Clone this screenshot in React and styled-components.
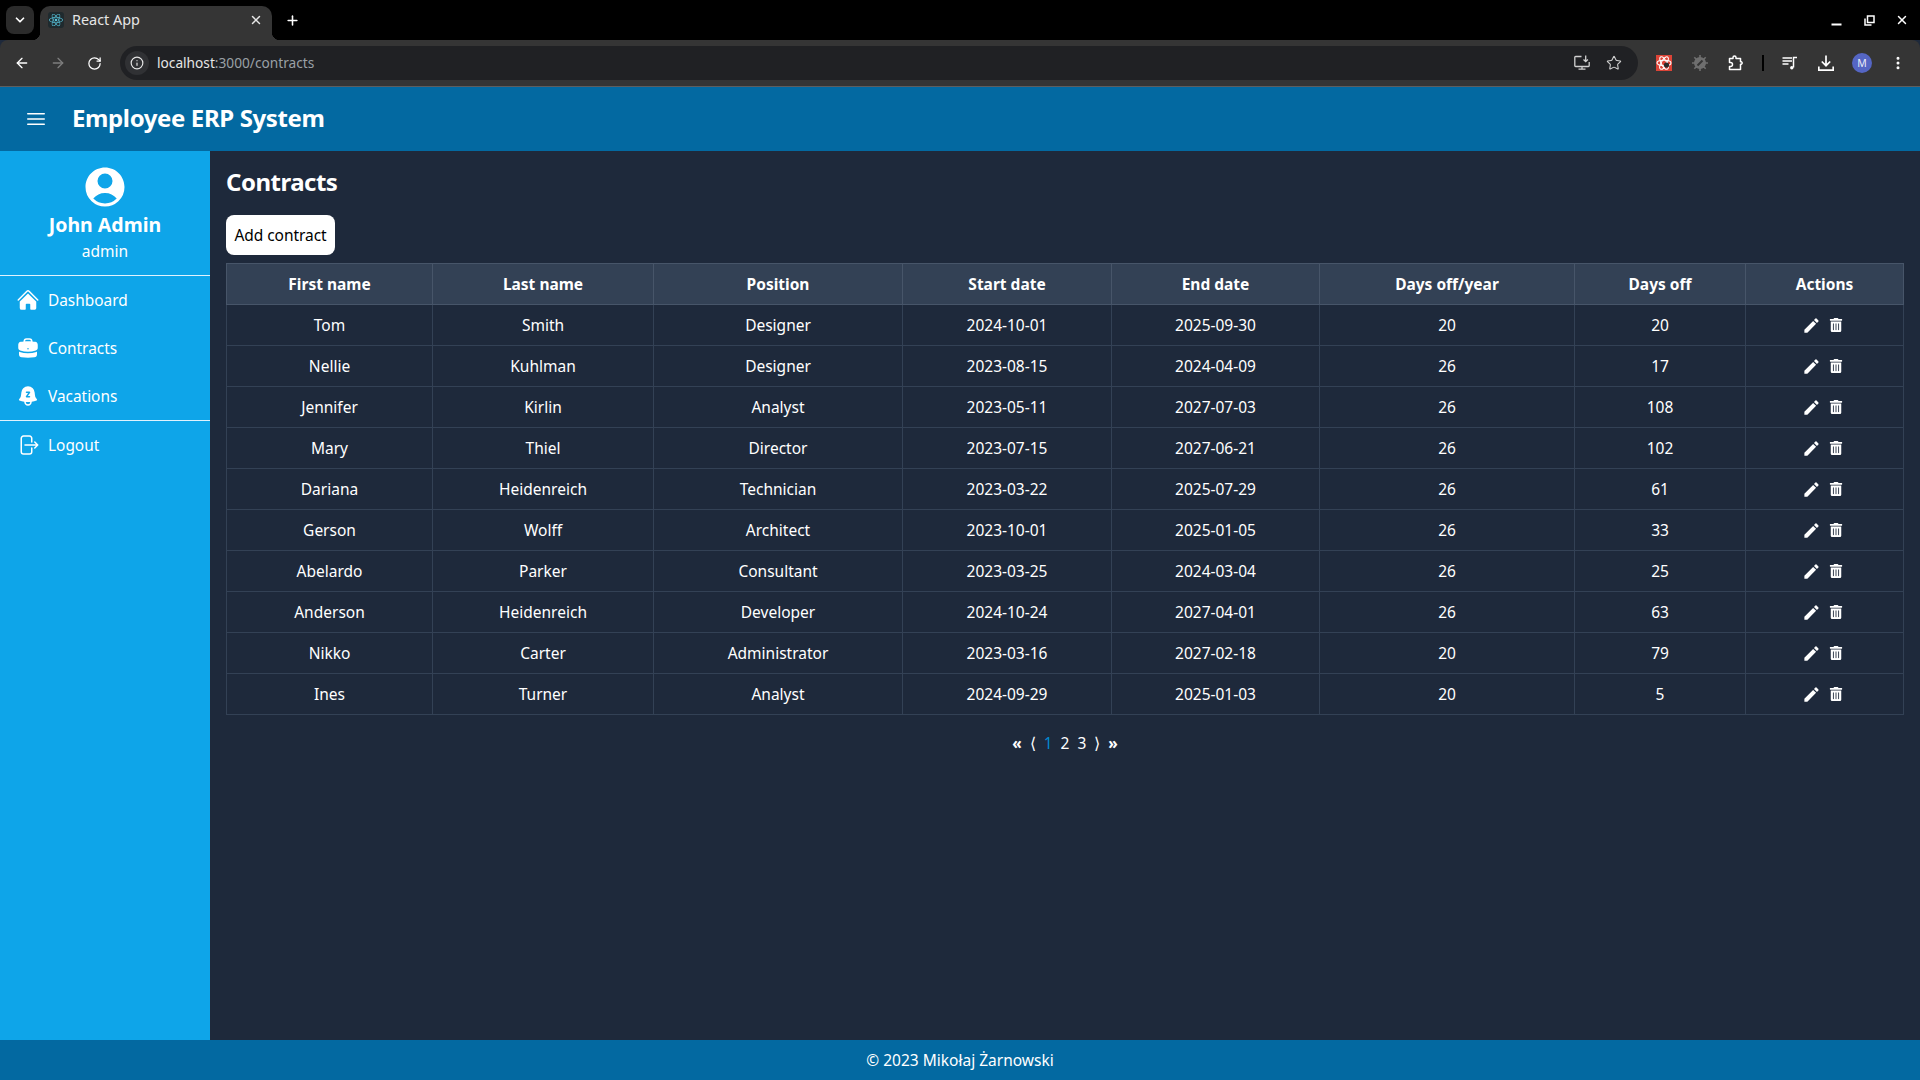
import React from 'react';
import styled, { createGlobalStyle } from 'styled-components';
import { ChevronDown, X, Plus, ArrowLeft, ArrowRight, RotateCw, Info, Star, EllipsisVertical } from 'lucide-react';
import { FaReact, FaTrashAlt } from 'react-icons/fa';
import { MdEdit } from 'react-icons/md';
import { HiHome, HiBriefcase, HiBellSnooze, HiUserCircle, HiOutlineBars3, HiOutlineArrowRightOnRectangle } from 'react-icons/hi2';

const FONT = '"Noto Sans", "Open Sans", sans-serif';

const Global = createGlobalStyle`
  html, body { margin: 0; padding: 0; height: 100%; background: #1e293b; }
  body { font-family: ${FONT}; font-size: 16px; color: #fff; overflow: hidden; }
  #root { height: 100%; }
  * { box-sizing: border-box; }
`;

const Shell = styled.div`display: flex; flex-direction: column; height: 1080px; width: 1920px;`;

const TabStrip = styled.div`display: flex; align-items: flex-end; height: 40px; background: #000;`;
const TabSearch = styled.div`
  width: 28px; height: 28px; margin: 0 6px 6px 6px; border-radius: 8px; background: #2b2b2b;
  display: flex; align-items: center; justify-content: center; color: #fff;
`;
const Tab = styled.div`
  width: 232px; height: 34px; background: #353535; border-radius: 10px 10px 0 0; position: relative;
  display: flex; align-items: center; padding: 0 9px 6px 8px; color: #e6e6e6; font-size: 14.4px;
  &::before, &::after {
    content: ''; position: absolute; bottom: 0; width: 8px; height: 8px;
  }
  &::before { left: -8px; background: radial-gradient(circle at 0 0, #000 8px, #353535 8.5px); }
  &::after { right: -8px; background: radial-gradient(circle at 100% 0, #000 8px, #353535 8.5px); }
`;
const Favicon = styled.div`
  width: 16px; height: 16px; background: #1f2a2e; border-radius: 3px; color: #58c4dc;
  display: flex; align-items: center; justify-content: center; margin-right: 8px;
`;
const TabTitle = styled.span`flex: 1; margin-bottom: 2px;`;
const NewTab = styled.div`
  width: 20px; height: 34px; margin-left: 10px; padding-bottom: 6px; display: flex; align-items: center; justify-content: center; color: #fff;
`;
const WindowControls = styled.div`margin-left: auto; height: 40px; display: flex; align-items: center; padding: 0 2px 0 0; color: #fff;`;
const WindowBtn = styled.div`width: 32.5px; display: flex; align-items: center; justify-content: center;`;

const Toolbar = styled.div`
  height: 47px; background: #353535; border-bottom: 1px solid #5e5e5e; display: flex; align-items: center;
  padding: 0 4px; border-radius: 8px 8px 0 0;
`;
const ToolBtn = styled.div`
  width: 36px; height: 36px; flex-shrink: 0; display: flex; align-items: center; justify-content: center;
  color: ${p => p.$dim ? '#7d7d7d' : '#fff'};
`;
const Omnibox = styled.div`
  width: 1518px; height: 34px; margin: 0 8px; border-radius: 17px; background: #202124;
  display: flex; align-items: center; padding: 0 8px 0 5px; font-size: 13.7px;
`;
const InfoChip = styled.div`
  width: 24px; height: 24px; border-radius: 50%; background: #303134; display: flex; align-items: center; justify-content: center;
  color: #e6e6e6; margin-right: 8px;
`;
const UrlText = styled.span`margin-bottom: 2px;`;
const Host = styled.span`color: #e6e6e6;`;
const UrlRest = styled.span`color: #9aa0a6;`;
const OmniActions = styled.div`margin-left: auto; display: flex; align-items: center; color: #d0d0d0;`;
const OmniBtn = styled.div`width: 32px; display: flex; align-items: center; justify-content: center;`;
const Separator = styled.div`width: 2px; height: 16px; background: #000; flex-shrink: 0; margin: 0 8px 0 8px;`;
const Avatar = styled.div`
  width: 20px; height: 20px; border-radius: 50%; background: #5566c4; color: #e8eaf6; font-size: 10.5px;
  display: flex; align-items: center; justify-content: center;
`;

const AppHeader = styled.header`
  height: 64px; background: #0369a1; display: flex; align-items: center; padding-left: 24px; flex-shrink: 0;
`;
const Brand = styled.div`font-size: 24px; font-weight: 700; margin: 0 0 3px 24px; letter-spacing: -0.38px;`;

const Body = styled.div`flex: 1; display: flex; min-height: 0;`;
const Sidebar = styled.aside`width: 210px; background: #0ea5e9; flex-shrink: 0;`;
const Profile = styled.div`
  height: 125px; display: flex; flex-direction: column; align-items: center; padding-top: 12px; border-bottom: 1px solid #e0f2fe;
`;
const ProfileName = styled.div`font-size: 19.5px; font-weight: 700; line-height: 28px;`;
const ProfileRole = styled.div`font-size: 15.5px; line-height: 24px;`;
const NavGroup = styled.nav`
  height: ${p => p.$h}px; border-bottom: ${p => p.$line ? '1px solid #e0f2fe' : 'none'};
`;
const NavItem = styled.div`
  height: 48px; display: flex; align-items: center; padding-left: 16px; gap: 8px; font-size: 15.4px;
`;
const Content = styled.main`flex: 1; background: #1e293b; padding: 15px 16px 0; min-width: 0;`;
const PageTitle = styled.h1`margin: 0 0 17px; font-size: 24px; font-weight: 700; line-height: 32px; letter-spacing: -0.5px;`;
const AddButton = styled.button`
  display: block; width: 109px; height: 40px; background: #fff; color: #000; border: 0; border-radius: 8px;
  font: 400 15.5px ${FONT}; padding: 0; letter-spacing: -0.05px;
`;
const Table = styled.table`
  width: 1677px; table-layout: fixed; border-collapse: collapse; margin-top: 8px; font-size: 15.5px;
`;
const Th = styled.th`
  height: 41px; padding: 0; background: #334155; border: 1px solid #475569; font-weight: 700; text-align: center;
`;
const Td = styled.td`
  height: 41px; padding: 0; border: 1px solid #334155; text-align: center;
`;
const ActionCell = styled.div`display: flex; align-items: center; justify-content: center; gap: 8px; padding-right: 5px;`;
const Pager = styled.div`
  display: flex; justify-content: center; align-items: center; gap: 8px; height: 28px; margin-top: 14px; font-size: 15.5px;
`;
const PageLink = styled.span`color: ${p => p.$active ? '#0288d1' : '#fff'}; font-weight: ${p => p.$bold ? 700 : 400};`;
const Footer = styled.footer`
  height: 40px; background: #0369a1; display: flex; align-items: center; justify-content: center; font-size: 15.5px; flex-shrink: 0;
`;

const widths = [206, 221, 249, 209, 208, 255, 171, 158];
const headers = ['First name', 'Last name', 'Position', 'Start date', 'End date', 'Days off/year', 'Days off', 'Actions'];
const rows = [
  ['Tom', 'Smith', 'Designer', '2024-10-01', '2025-09-30', '20', '20'],
  ['Nellie', 'Kuhlman', 'Designer', '2023-08-15', '2024-04-09', '26', '17'],
  ['Jennifer', 'Kirlin', 'Analyst', '2023-05-11', '2027-07-03', '26', '108'],
  ['Mary', 'Thiel', 'Director', '2023-07-15', '2027-06-21', '26', '102'],
  ['Dariana', 'Heidenreich', 'Technician', '2023-03-22', '2025-07-29', '26', '61'],
  ['Gerson', 'Wolff', 'Architect', '2023-10-01', '2025-01-05', '26', '33'],
  ['Abelardo', 'Parker', 'Consultant', '2023-03-25', '2024-03-04', '26', '25'],
  ['Anderson', 'Heidenreich', 'Developer', '2024-10-24', '2027-04-01', '26', '63'],
  ['Nikko', 'Carter', 'Administrator', '2023-03-16', '2027-02-18', '20', '79'],
  ['Ines', 'Turner', 'Analyst', '2024-09-29', '2025-01-03', '20', '5'],
];

const InstallIcon = () => (
  <svg width="16" height="16" viewBox="0 0 16 16" fill="none" stroke="currentColor" strokeWidth="1.3">
    <path d="M7.5 1.5H1.6a.8.8 0 0 0-.8.8v8.4a.8.8 0 0 0 .8.8h12.8a.8.8 0 0 0 .8-.8V7" />
    <path d="M4.5 14.2h7M8 11.5v2.7" />
    <path d="M11.7 .5v6M9.5 4.5l2.2 2.2 2.2-2.2" />
  </svg>
);

const ExtensionRed = () => (
  <svg width="16" height="16" viewBox="0 0 16 16">
    <rect width="16" height="16" fill="#dc4437" />
    <g fill="none" stroke="#fff" strokeWidth="1.1">
      <ellipse cx="8" cy="8" rx="7" ry="2.7" />
      <ellipse cx="8" cy="8" rx="7" ry="2.7" transform="rotate(60 8 8)" />
      <ellipse cx="8" cy="8" rx="7" ry="2.7" transform="rotate(120 8 8)" />
    </g>
    <circle cx="10.5" cy="10" r="2.6" fill="#2b2b2b" />
  </svg>
);

const BugGear = () => (
  <svg width="16" height="16" viewBox="0 0 16 16">
    <circle cx="8" cy="8" r="6" fill="#6f6f6f" />
    <path d="M8 0v16M0 8h16M2.3 2.3l11.4 11.4M13.7 2.3 2.3 13.7" stroke="#6f6f6f" strokeWidth="1.6" />
    <path d="M5.5 10.5l5-5" stroke="#353535" strokeWidth="2" />
  </svg>
);

const PuzzleIcon = () => (
  <svg width="16" height="16" viewBox="0 0 16 16" fill="none" stroke="currentColor" strokeWidth="1.5" strokeLinejoin="round">
    <path d="M1.5 3.5H5V2.5a1.5 1.5 0 0 1 3 0v1h4.5v3.3h1a1.4 1.4 0 0 1 0 2.4h-1v5.3H1.5v-3h1a2 2 0 0 0 0-4h-1z" />
  </svg>
);

const QueueIcon = () => (
  <svg width="16" height="16" viewBox="0 0 16 16" fill="none" stroke="currentColor" strokeWidth="1.5">
    <path d="M0.5 3h9.5M0.5 6h9.5M0.5 9h6" />
    <path d="M11.5 12.5V2.5h3.5" />
    <circle cx="9.8" cy="12.7" r="1.7" fill="currentColor" stroke="none" />
  </svg>
);

const DownloadIcon = () => (
  <svg width="16" height="16" viewBox="0 0 16 16" fill="none" stroke="currentColor" strokeWidth="1.7">
    <path d="M8 0.5v10M3.8 6.5 8 10.7l4.2-4.2" />
    <path d="M0.8 11.5v3.6h14.4v-3.6" />
  </svg>
);

const MinimizeIcon = () => (
  <svg width="11" height="11" viewBox="0 0 11 11"><rect x="0.5" y="8.5" width="10" height="2" fill="currentColor" /></svg>
);

const RestoreIcon = () => (
  <svg width="11" height="11" viewBox="0 0 11 11" fill="none" stroke="currentColor" strokeWidth="1.5"><path d="M3.5 1h6.5v6.5H3.5zM1 3.5V10h6.5" /></svg>
);

export default function App() {
  return (
    <Shell>
      <Global />
      <TabStrip>
        <TabSearch><ChevronDown size={14} strokeWidth={3} /></TabSearch>
        <Tab>
          <Favicon><FaReact size={14} /></Favicon>
          <TabTitle>React App</TabTitle>
          <X size={14} strokeWidth={2.5} />
        </Tab>
        <NewTab><Plus size={15} strokeWidth={2.5} /></NewTab>
        <WindowControls>
          <WindowBtn><MinimizeIcon /></WindowBtn>
          <WindowBtn><RestoreIcon /></WindowBtn>
          <WindowBtn><X size={14} strokeWidth={2.5} /></WindowBtn>
        </WindowControls>
      </TabStrip>
      <Toolbar>
        <ToolBtn><ArrowLeft size={16} strokeWidth={2} /></ToolBtn>
        <ToolBtn $dim><ArrowRight size={16} strokeWidth={2} /></ToolBtn>
        <ToolBtn><RotateCw size={15} strokeWidth={2} /></ToolBtn>
        <Omnibox>
          <InfoChip><Info size={14} /></InfoChip>
          <UrlText><Host>localhost</Host><UrlRest>:3000/contracts</UrlRest></UrlText>
          <OmniActions>
            <OmniBtn><InstallIcon /></OmniBtn>
            <OmniBtn><Star size={16} strokeWidth={1.6} /></OmniBtn>
          </OmniActions>
        </Omnibox>
        <ToolBtn><ExtensionRed /></ToolBtn>
        <ToolBtn><BugGear /></ToolBtn>
        <ToolBtn><PuzzleIcon /></ToolBtn>
        <Separator />
        <ToolBtn><QueueIcon /></ToolBtn>
        <ToolBtn><DownloadIcon /></ToolBtn>
        <ToolBtn><Avatar>M</Avatar></ToolBtn>
        <ToolBtn><EllipsisVertical size={16} strokeWidth={2.5} /></ToolBtn>
      </Toolbar>
      <AppHeader>
        <HiOutlineBars3 size={24} strokeWidth={1.5} />
        <Brand>Employee ERP System</Brand>
      </AppHeader>
      <Body>
        <Sidebar>
          <Profile>
            <HiUserCircle size={48} />
            <ProfileName>John Admin</ProfileName>
            <ProfileRole>admin</ProfileRole>
          </Profile>
          <NavGroup $line $h={145}>
            <NavItem><HiHome size={24} />Dashboard</NavItem>
            <NavItem><HiBriefcase size={24} />Contracts</NavItem>
            <NavItem><HiBellSnooze size={24} />Vacations</NavItem>
          </NavGroup>
          <NavGroup $h={48}>
            <NavItem><HiOutlineArrowRightOnRectangle size={24} />Logout</NavItem>
          </NavGroup>
        </Sidebar>
        <Content>
          <PageTitle>Contracts</PageTitle>
          <AddButton>Add contract</AddButton>
          <Table>
            <colgroup>{widths.map((w, i) => <col key={i} style={{ width: w }} />)}</colgroup>
            <thead>
              <tr>{headers.map(h => <Th key={h}>{h}</Th>)}</tr>
            </thead>
            <tbody>
              {rows.map(r => (
                <tr key={r[0]}>
                  {r.map((c, i) => <Td key={i}>{c}</Td>)}
                  <Td><ActionCell><MdEdit size={19} /><FaTrashAlt size={14} /></ActionCell></Td>
                </tr>
              ))}
            </tbody>
          </Table>
          <Pager>
            <PageLink $bold>«</PageLink>
            <PageLink>⟨</PageLink>
            <PageLink $active>1</PageLink>
            <PageLink>2</PageLink>
            <PageLink>3</PageLink>
            <PageLink>⟩</PageLink>
            <PageLink $bold>»</PageLink>
          </Pager>
        </Content>
      </Body>
      <Footer>© 2023 Mikołaj Żarnowski</Footer>
    </Shell>
  );
}
